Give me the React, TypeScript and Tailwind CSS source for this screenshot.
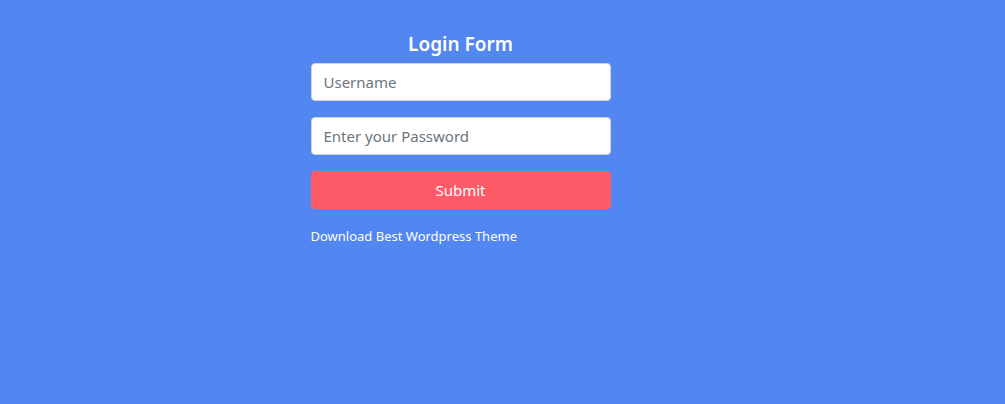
export default function App() {
  return (
    <div className="flex min-h-[404px] w-full justify-center bg-[#5286f1] pr-[84px] font-['Segoe_UI','Noto_Sans',sans-serif]">
      <div className="flex w-[300px] flex-col pt-[31px]">
        <h2 className="text-center text-[19px] font-semibold leading-[27px] text-white">Login Form</h2>
        <form className="mt-[5px] flex flex-col gap-4" onSubmit={(e) => e.preventDefault()}>
          <input
            type="text"
            placeholder="Username"
            className="h-[38px] rounded border border-[#ced4da] bg-white px-3 text-[15px] text-[#495057] outline-none placeholder:text-[#6c757d]"
          />
          <input
            type="password"
            placeholder="Enter your Password"
            className="h-[38px] rounded border border-[#ced4da] bg-white px-3 text-[15px] text-[#495057] outline-none placeholder:text-[#6c757d]"
          />
          <button type="submit" className="h-[38px] rounded bg-[#ff5a68] text-[15px] text-white">
            Submit
          </button>
        </form>
        <a href="#" className="mt-[17px] text-[13px] leading-5 text-white">
          Download Best Wordpress Theme
        </a>
      </div>
    </div>
  );
}
